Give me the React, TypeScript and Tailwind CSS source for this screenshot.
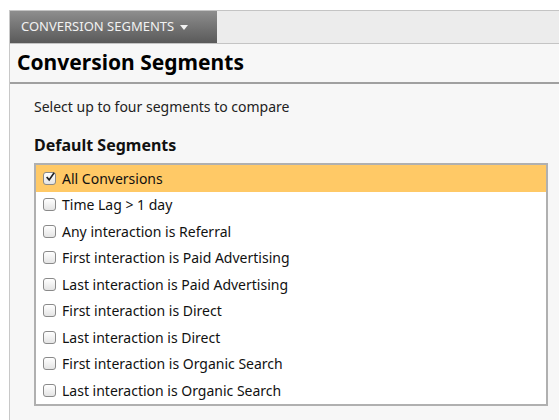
const segments = [
  "All Conversions",
  "Time Lag > 1 day",
  "Any interaction is Referral",
  "First interaction is Paid Advertising",
  "Last interaction is Paid Advertising",
  "First interaction is Direct",
  "Last interaction is Direct",
  "First interaction is Organic Search",
  "Last interaction is Organic Search",
];

export default function App() {
  return (
    <div className="w-[560px] h-[420px] bg-white pt-[10px] pl-[9px] font-[family-name:'Liberation_Sans',Arial,sans-serif] overflow-hidden">
      <div className="w-[550px] h-[420px] border-l border-[#c8c8c8] bg-[#f7f7f7]">
        <div className="flex h-[34px] bg-[#ececec] border-t border-b border-[#c4c4c4]">
          <div className="w-[207px] h-full flex items-center pl-[11px] gap-[6px] bg-gradient-to-b from-[#8e8e8e] to-[#5a5a5a] text-[#f2f2f2] text-[13px]">
            <span>CONVERSION SEGMENTS</span>
            <svg width="8" height="5" viewBox="0 0 8 5"><path d="M0 0h8L4 5z" fill="#f2f2f2" /></svg>
          </div>
        </div>
        <div className="h-[40px] flex items-center pl-[7px] border-b-2 border-[#a0a0a0] text-[21px] font-bold text-black">
          Conversion Segments
        </div>
        <div className="pl-[24px] pr-[11px]">
          <div className="mt-[12px] text-[14px] text-[#222]">Select up to four segments to compare</div>
          <div className="mt-[16px] text-[16px] font-bold text-[#111]">Default Segments</div>
          <div className="mt-[6px] border-2 border-[#b0b0b0] bg-white">
            {segments.map((s, i) => (
              <div
                key={s}
                className={`h-[26.5px] flex items-center pl-[7px] gap-[6px] text-[14px] text-[#111] ${i === 0 ? "bg-[#ffc966]" : ""}`}
              >
                <span className="w-[13px] h-[13px] rounded-[3px] border border-[#8a8a8a] bg-gradient-to-b from-white to-[#e4e4e4] flex items-center justify-center">
                  {i === 0 && (
                    <svg width="12" height="12" viewBox="0 0 12 12" className="-mt-[2px] ml-[1px]">
                      <path d="M2 6l3 3.5L11 1" stroke="#222" strokeWidth="2" fill="none" />
                    </svg>
                  )}
                </span>
                <span>{s}</span>
              </div>
            ))}
          </div>
        </div>
      </div>
    </div>
  );
}
